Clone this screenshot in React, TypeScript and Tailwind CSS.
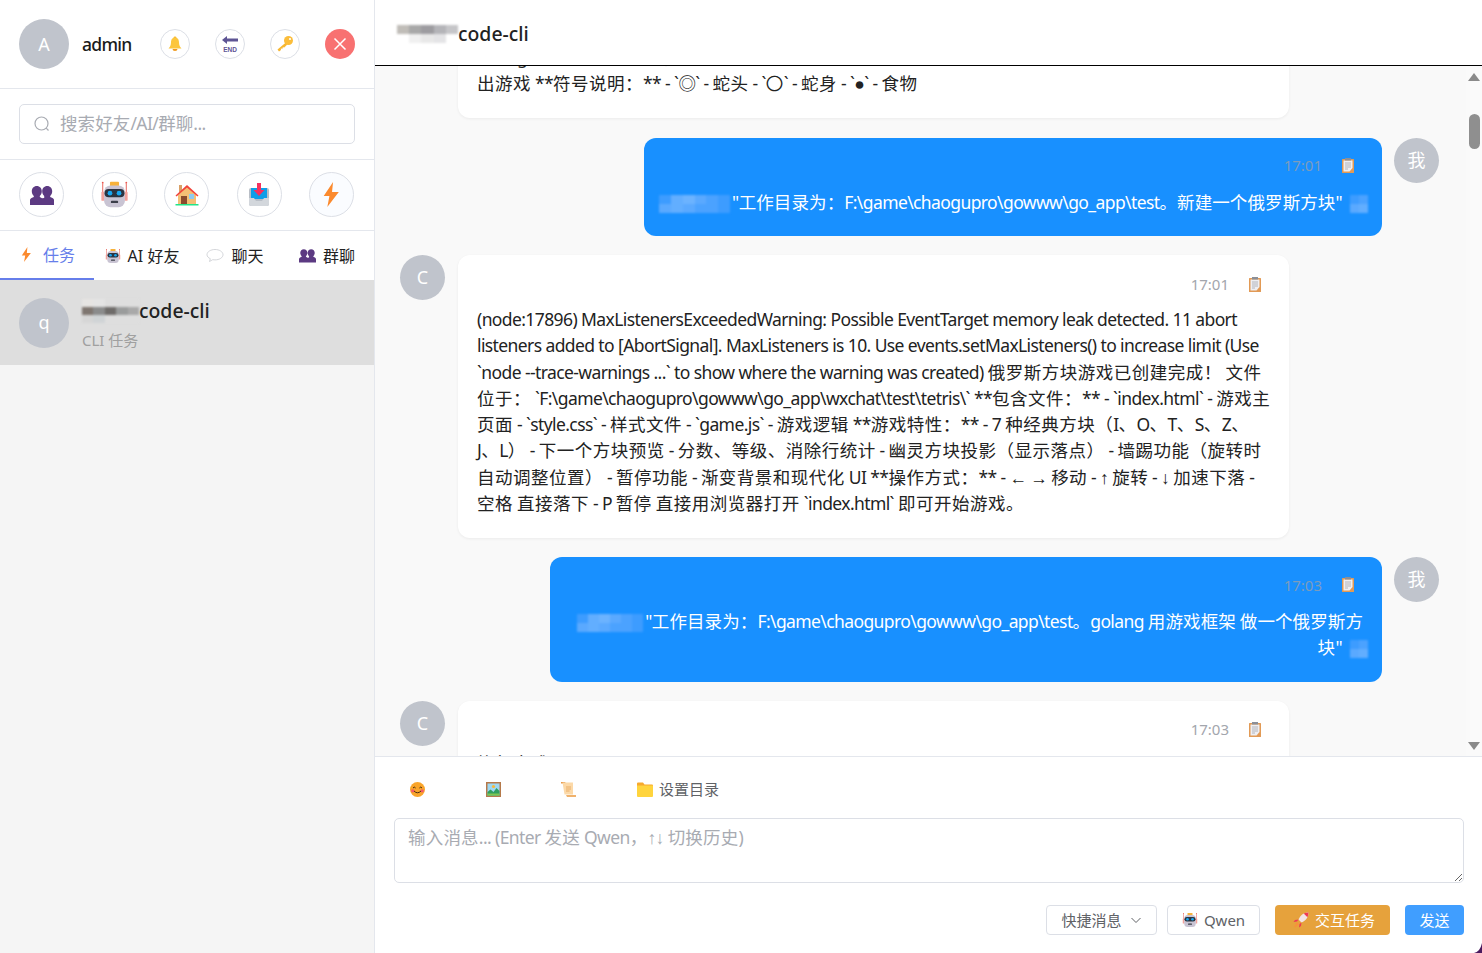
const SANS = 'font-["Noto_Sans","Liberation_Sans","Noto_Sans_CJK_SC",sans-serif]'

function Robot({ size = 30 }: { size?: number }) {
  return (
    <svg width={size} height={size} viewBox="0 0 32 32">
      <path d="M3 4v14M29 4v14" stroke="#e8584f" strokeWidth="1" />
      <circle cx="3" cy="3" r="1" fill="#e8584f" />
      <circle cx="29" cy="3" r="1" fill="#e8584f" />
      <rect x="1.500" y="13" width="3.500" height="10" rx="1" fill="#f2a29b" />
      <rect x="27" y="13" width="3.500" height="10" rx="1" fill="#f2a29b" />
      <rect x="11" y="2" width="10" height="5" rx="1" fill="#f7b23b" />
      <rect x="4.500" y="6" width="23" height="24" rx="7" fill="#c9c4d3" />
      <rect x="5" y="10" width="22" height="9" rx="4.500" fill="#2b3440" />
      <circle cx="11" cy="14.500" r="2.600" fill="#18a7f0" />
      <circle cx="21" cy="14.500" r="2.600" fill="#18a7f0" />
      <rect x="12" y="23" width="8" height="2.500" rx="1" fill="#3c3f4a" />
    </svg>
  )
}

function Group({ size = 24 }: { size?: number }) {
  return (
    <svg width={size} height={size} viewBox="0 0 24 24" fill="#5c3a82">
      <path d="M6.800 3c3 0 5 2.300 5 5.200 0 2-.8 3.700-2 4.700v1l2.200 1.300L14.200 14.900v-2C13 11.900 12.200 10.200 12.200 8.200 12.200 5.300 14.200 3 17.200 3s5 2.300 5 5.200c0 2-.8 3.700-2 4.700v1l2.300 1c1 .5 1.500 1.300 1.500 2.300V22H0v-4.800c0-1 .5-1.800 1.500-2.300l2.300-1v-1c-1.200-1-2-2.700-2-4.700C1.800 5.300 3.800 3 6.800 3z" />
    </svg>
  )
}

function House() {
  return (
    <svg width="24" height="24" viewBox="0 0 24 24">
      <rect x="4" y="2" width="3" height="7" fill="#d9a066" />
      <path d="M12 3l9 9v9H3v-9z" fill="#f4bf75" />
      <path d="M0.500 12.500L12 2l11.500 10.500-1 1L12 4.500 1.500 13.500z" fill="#f0433a" />
      <rect x="6" y="13" width="6" height="8" fill="#8a4b2d" />
      <rect x="14" y="11" width="5" height="5" fill="#8ec9f0" />
      <rect x="0.500" y="21" width="23" height="1.500" fill="#22e58a" />
    </svg>
  )
}

function Inbox() {
  return (
    <svg width="24" height="24" viewBox="0 0 24 24">
      <rect x="2" y="5" width="20" height="18" rx="2" fill="#b9bec6" />
      <path d="M4 5h16v11H4z" fill="#0f9ee8" />
      <path d="M2 15h5l2 3h6l2-3h5v6a2 2 0 0 1-2 2H4a2 2 0 0 1-2-2z" fill="#d3d7dc" />
      <path d="M10 0h4v7h3.500L12 13 6.500 7H10z" fill="#f6325f" />
    </svg>
  )
}

function Bolt({ size = 24 }: { size?: number }) {
  return (
    <svg width={size} height={size} viewBox="0 0 24 24">
      <path d="M13.500 0L4.500 13.500h5.500L8 24l11-14.500h-6.500z" fill="#fb8a2e" />
    </svg>
  )
}

function Bell() {
  return (
    <svg width="16" height="16" viewBox="0 0 16 16">
      <circle cx="8" cy="1.800" r="1.400" fill="#f5b52e" />
      <path d="M8 1.500c3 0 4 2.500 4 5 0 2.500 1 4.500 2.500 6h-13C3 11 4 9 4 6.500c0-2.500 1-5 4-5z" fill="#fcc63d" />
      <path d="M5.500 13h5a2.500 2 0 0 1-5 0z" fill="#f09a1e" />
    </svg>
  )
}

function EndArrow() {
  return (
    <svg width="18" height="18" viewBox="0 0 18 18">
      <path d="M1 5l5-4v2.500h11v3H6V9z" fill="#5d5494" />
      <text x="9" y="16.500" textAnchor="middle" fontSize="6.500" fontWeight="700" fill="#5d5494" fontFamily="Liberation Sans, sans-serif">END</text>
    </svg>
  )
}

function Key() {
  return (
    <svg width="18" height="18" viewBox="0 0 18 18">
      <path d="M10.500 7L1.500 14.500l1.500 2 2-1.500-.2-1.500 1.700.2.300-1.500 1.500.2 4-4z" fill="#f7b731" />
      <circle cx="12.500" cy="5.500" r="4.500" fill="#fbbd3a" />
      <circle cx="14" cy="4" r="1.100" fill="#fff" />
    </svg>
  )
}

function Clipboard() {
  return (
    <svg width="12" height="15" viewBox="0 0 12 15">
      <rect x="0" y="1" width="12" height="14" rx="0.500" fill="#e29a55" />
      <path d="M1.500 2.500h9V10l-3 3.500h-6z" fill="#eeeef2" />
      <rect x="3" y="0" width="6" height="2.500" fill="#8b8f98" />
      <path d="M3 5h6M3 7h6M3 9h6M3 11h3" stroke="#a3a6ae" strokeWidth="0.800" />
    </svg>
  )
}

function Smile() {
  return (
    <svg width="15" height="15" viewBox="0 0 15 15">
      <circle cx="7.500" cy="7.500" r="7.500" fill="#f9a52b" />
      <circle cx="2.800" cy="8.800" r="1.600" fill="#f4586a" />
      <circle cx="12.200" cy="8.800" r="1.600" fill="#f4586a" />
      <path d="M3 6q1.300-1.800 2.600 0M9.400 6q1.300-1.800 2.600 0M4 9q3.500 3.500 7 0" stroke="#4a2c12" strokeWidth="1" fill="none" />
    </svg>
  )
}

function Picture() {
  return (
    <svg width="15" height="15" viewBox="0 0 15 15">
      <rect width="15" height="15" fill="#b5794a" />
      <rect x="1.500" y="1.500" width="12" height="12" fill="#9fd8f2" />
      <circle cx="7.500" cy="4.500" r="1.600" fill="#f8b83a" />
      <path d="M1.500 10l3-2.500 3 2.500 3-4 3 3v4.500h-12z" fill="#2f9e5f" />
      <rect x="1.500" y="11.500" width="12" height="2" fill="#7fc651" />
    </svg>
  )
}

function Scroll() {
  return (
    <svg width="15" height="15" viewBox="0 0 15 15">
      <path d="M0 0h4l1 1.500H0z" fill="#e89a4b" />
      <path d="M1.500 0.500h10.500v12H3.500z" fill="#fcd9a8" />
      <path d="M5 13h10v2H6z" fill="#f0b26c" />
      <path d="M5 5h5M5 7h5M5 9h3.500" stroke="#e8a860" strokeWidth="0.900" />
    </svg>
  )
}

function Folder() {
  return (
    <svg width="16" height="15" viewBox="0 0 16 15">
      <path d="M0 1.500a1 1 0 0 1 1-1h5l1.500 2H15a1 1 0 0 1 1 1V5H0z" fill="#f7a92e" />
      <path d="M0 3.500h16V14a1 1 0 0 1-1 1H1a1 1 0 0 1-1-1z" fill="#ffd43d" />
    </svg>
  )
}

function Rocket() {
  return (
    <svg width="16" height="16" viewBox="0 0 16 16">
      <path d="M15.500.500c-4.500 0-8 2.500-10 7l3 3c4.500-2 7-5.500 7-10z" fill="#f3e4e4" />
      <path d="M15.500.500c-1.800 0-3.400.4-4.800 1.100l3.700 3.700c.7-1.400 1.100-3 1.100-4.800z" fill="#ee3a52" />
      <path d="M5.500 7.500L2 8l-1.500 2 3.500-.5zM8.500 10.500L8 14l-2 1.500.5-3.500z" fill="#ee3a52" />
      <path d="M4 10l2 2-3.500 3.500-1.500-.5z" fill="#f8913a" />
    </svg>
  )
}

function Bubble() {
  return (
    <svg width="18" height="15" viewBox="0 0 18 15">
      <path d="M9 1.500c4.400 0 8 2.300 8 5.200s-3.600 5.200-8 5.200c-.8 0-1.600-.1-2.300-.2L3.500 13.500l.8-2.800C2.300 9.800 1 8.400 1 6.700 1 3.800 4.600 1.500 9 1.500z" fill="#fff" stroke="#c9ccd1" strokeWidth="0.800" />
    </svg>
  )
}

// mosaic over a redacted word in the screenshot
function Blur({ w, h = 14, rows }: { w: number; h?: number; rows: string[][] }) {
  return (
    <span className="inline-flex flex-col align-middle blur-[1px]" style={{ width: w, height: h }}>
      {rows.map((row, r) => (
        <span key={r} className="flex flex-1">
          {row.map((c, i) => (
            <span key={i} className="flex-1" style={{ background: c }} />
          ))}
        </span>
      ))}
    </span>
  )
}

const BUBBLE_WIDE = [
  ['#3d9cff', '#62aeff', '#6cb3ff', '#5aa9ff', '#4ba2ff', '#3d9cff'],
  ['#5aa9ff', '#62aeff', '#5aa9ff', '#4ba2ff', '#4ba2ff', '#3d9cff'],
]
const BUBBLE_NARROW = [
  ['#3d9cff', '#4ba2ff'],
  ['#5aa9ff', '#62aeff'],
]

// the latin and the CJK runs have different advances in the screenshot
function Mixed({ text, latin = 'tracking-[-0.6px]', cjk = 'tracking-[0.5px]' }: { text: string; latin?: string; cjk?: string }) {
  return (
    <>
      {text.split(/([\u3000-\u9fff\uff00-\uffef]+)/).map((part, i) => (
        <span key={i} className={i % 2 === 1 ? cjk : latin}>{part}</span>
      ))}
    </>
  )
}

const REPLY_LINES = [
  '(node:17896) MaxListenersExceededWarning: Possible EventTarget memory leak detected. 11 abort',
  'listeners added to [AbortSignal]. MaxListeners is 10. Use events.setMaxListeners() to increase limit (Use',
  '`node --trace-warnings ...` to show where the warning was created) 俄罗斯方块游戏已创建完成！ 文件',
  '位于： `F:\\game\\chaogupro\\gowww\\go_app\\wxchat\\test\\tetris\\` **包含文件：** - `index.html` - 游戏主',
  '页面 - `style.css` - 样式文件 - `game.js` - 游戏逻辑 **游戏特性：** - 7 种经典方块（I、O、T、S、Z、',
  'J、L） - 下一个方块预览 - 分数、等级、消除行统计 - 幽灵方块投影（显示落点） - 墙踢功能（旋转时',
  '自动调整位置） - 暂停功能 - 渐变背景和现代化 UI **操作方式：** - ← → 移动 - ↑ 旋转 - ↓ 加速下落 -',
  '空格 直接落下 - P 暂停 直接用浏览器打开 `index.html` 即可开始游戏。',
]

function IconButton({ children, danger }: { children?: React.ReactNode; danger?: boolean }) {
  return (
    <button className={danger
      ? 'flex h-[30px] w-[30px] items-center justify-center rounded-full bg-[#f87171]'
      : 'flex h-[30px] w-[30px] items-center justify-center rounded-full border border-[#dcdfe6] bg-white'}>
      {children}
    </button>
  )
}

function ActionButton({ children, tint }: { children: React.ReactNode; tint?: boolean }) {
  return (
    <button className={`flex h-[45px] w-[45px] items-center justify-center rounded-full border border-[#dcdfe6] ${tint ? 'bg-[#fafcff]' : 'bg-white'}`}>
      {children}
    </button>
  )
}

function Avatar({ label, size = 45 }: { label: string; size?: number }) {
  return (
    <div
      className="flex shrink-0 items-center justify-center rounded-full bg-[#c0c4cc] text-[18px] text-white"
      style={{ width: size, height: size }}
    >
      {label}
    </div>
  )
}

function MineMeta({ time }: { time: string }) {
  return (
    <div className="flex h-[20px] items-center justify-end gap-[20px] pr-[14px] text-[15px] text-[#7c9cbc]">
      <span>{time}</span>
      <Clipboard />
    </div>
  )
}

function TheirMeta({ time }: { time: string }) {
  return (
    <div className="flex h-[20px] items-center justify-end gap-[20px] pr-[9px] text-[15px] text-[#a3a6ad]">
      <span>{time}</span>
      <Clipboard />
    </div>
  )
}

export default function App() {
  return (
    <div className={`relative flex h-[953px] w-[1482px] overflow-hidden bg-white text-[#222] ${SANS}`}>
      {/* Sidebar */}
      <aside className="flex w-[375px] shrink-0 flex-col border-r border-[#e4e7ed] bg-[#f5f5f5]">
        <div className="flex h-[89px] shrink-0 items-center border-b border-[#e4e7ed] bg-white pl-[19px] pr-[19px]">
          <Avatar label="A" size={50} />
          <span className="ml-[13px] text-[17.5px] font-medium tracking-[-0.7px] text-[#1a1a1a]">admin</span>
          <div className="ml-auto flex items-center gap-[25px] pb-[1px]">
            <IconButton><Bell /></IconButton>
            <IconButton><EndArrow /></IconButton>
            <IconButton><Key /></IconButton>
            <IconButton danger>
              <svg width="14" height="14" viewBox="0 0 14 14" stroke="#fff" strokeWidth="1.500"><path d="M1.500 1.500l11 11M12.500 1.500l-11 11" /></svg>
            </IconButton>
          </div>
        </div>

        <div className="flex h-[71px] shrink-0 items-center border-b border-[#e4e7ed] bg-white px-[19px]">
          <div className="flex h-[40px] w-full items-center rounded-[5px] border border-[#dcdfe6] pl-[14px]">
            <svg width="16" height="16" viewBox="0 0 16 16" fill="none" stroke="#a8abb2" strokeWidth="1.200">
              <circle cx="7.500" cy="7.500" r="6.500" />
              <path d="M12.200 12.200l2.300 2.300" />
            </svg>
            <span className="mb-[2px] ml-[10px] text-[17.5px] text-[#a8abb2]">
              <Mixed text="搜索好友/AI/群聊..." cjk="tracking-[0.1px]" />
            </span>
          </div>
        </div>

        <div className="flex h-[71px] shrink-0 items-center justify-between border-b border-[#e4e7ed] bg-white pb-[1px] pl-[19px] pr-[20px]">
          <ActionButton><Group /></ActionButton>
          <ActionButton><Robot size={29} /></ActionButton>
          <ActionButton><House /></ActionButton>
          <ActionButton><Inbox /></ActionButton>
          <ActionButton tint><Bolt size={25} /></ActionButton>
        </div>

        <div className="flex h-[49px] shrink-0 bg-white text-[16px] leading-none">
          <div className="flex w-[94px] items-center justify-center gap-[9px] border-b-2 border-[#667eea] text-[#667eea]">
            <Bolt size={15} />
            <span>任务</span>
          </div>
          <div className="flex w-[96px] items-center justify-center gap-[7px]">
            <Robot size={16} />
            <span>AI 好友</span>
          </div>
          <div className="flex w-[90px] items-center justify-center gap-[7px]">
            <Bubble />
            <span>聊天</span>
          </div>
          <div className="flex w-[94px] items-center justify-center gap-[7px]">
            <Group size={17} />
            <span>群聊</span>
          </div>
        </div>

        <div className="flex h-[85px] shrink-0 items-center bg-[#dedede] pl-[19px]">
          <Avatar label="q" size={50} />
          <div className="ml-[13px]">
            <div className="mt-[3px] flex h-[26px] items-center text-[19.4px] font-medium leading-none">
              <Blur
                w={57}
                h={24}
                rows={[
                  ['#e6e4e2', '#e4e4e4', '#dedede', '#dedede', '#dedede'],
                  ['#7f7670', '#8b8c8c', '#6f6c6a', '#9a9c9c', '#a9a9a9'],
                  ['#d6d6d6', '#d0d4d6', '#dedede', '#dedede', '#dedede'],
                ]}
              />
              <span>code-cli</span>
            </div>
            <div className="mt-[6px] text-[15px] leading-[20px] text-[#a0a0a0]">CLI 任务</div>
          </div>
        </div>
      </aside>

      {/* Chat */}
      <main className="flex min-w-0 flex-1 flex-col">
        <header className="flex h-[66px] shrink-0 items-center border-b border-black pl-[22px] pt-[3px]">
          <Blur
            w={61}
            h={18}
            rows={[
              ['#c0bdb8', '#a8a8a8', '#9d9ca0', '#b4b4b8', '#c5c5c8'],
              ['#ffffff', '#f0f0f0', '#e8e8e8', '#e4e4e6', '#ffffff'],
            ]}
          />
          <span className="text-[19.4px] font-medium">code-cli</span>
        </header>

        <div className="flex min-h-0 flex-1 bg-[#f9f9f9]">
          <div className="min-w-0 flex-1 overflow-hidden pl-[25px] pr-[27px]">
            <div className="-mt-[40px] flex flex-col gap-[18.75px] text-[17.5px] leading-[26.25px]">
              <div className="mb-[1.25px] ml-[58px] w-[831px] rounded-[12px] bg-white px-[19px] pb-[21px] pt-[18px] shadow-[0_1px_3px_rgba(0,0,0,0.06)]">
                <Mixed text="运行 git status 查看结果，并退出游戏" />
                <br />
                <Mixed text="出游戏 **符号说明：** - `◎` - 蛇头 - `〇` - 蛇身 - `●` - 食物" />
              </div>

              <div className="flex items-start justify-end gap-[12px]">
                <div className="rounded-[12px] bg-[#1890ff] pb-[21.5px] pl-[15px] pr-[14px] pt-[18px] text-white">
                  <MineMeta time="17:01" />
                  <div className="mt-[13px] whitespace-nowrap">
                    <Blur w={71} h={18} rows={BUBBLE_WIDE} />
                    <span className="mx-[2px]"><Mixed cjk="tracking-[0.1px]" text={'"工作目录为：F:\\game\\chaogupro\\gowww\\go_app\\test。新建一个俄罗斯方块"'} /></span>
                    <span className="ml-[6px]"><Blur w={18} h={18} rows={BUBBLE_NARROW} /></span>
                  </div>
                </div>
                <Avatar label="我" />
              </div>

              <div className="flex items-start gap-[13px]">
                <Avatar label="C" />
                <div className="w-[831px] rounded-[12px] bg-white px-[19px] pb-[22px] pt-[19px] shadow-[0_1px_3px_rgba(0,0,0,0.06)]">
                  <TheirMeta time="17:01" />
                  <div className="mt-[12px] whitespace-nowrap">
                    {REPLY_LINES.map((line) => (
                      <div key={line}><Mixed text={line} /></div>
                    ))}
                  </div>
                </div>
              </div>

              <div className="flex items-start justify-end gap-[12px]">
                <div className="w-[832px] rounded-[12px] bg-[#1890ff] pb-[21.5px] pl-[15px] pr-[14px] pt-[18px] text-right text-white">
                  <MineMeta time="17:03" />
                  <div className="mt-[13px] whitespace-nowrap">
                    <div>
                      <Blur w={66} h={18} rows={BUBBLE_WIDE} />
                      <span className="ml-[2px] mr-[5px]"><Mixed cjk="tracking-[0.1px]" text={'"工作目录为：F:\\game\\chaogupro\\gowww\\go_app\\test。golang 用游戏框架 做一个俄罗斯方'} /></span>
                    </div>
                    <div>
                      <span className="mr-[2px]"><Mixed text={'块"'} /></span>
                      <span className="ml-[6px]"><Blur w={18} h={18} rows={BUBBLE_NARROW} /></span>
                    </div>
                  </div>
                </div>
                <Avatar label="我" />
              </div>

              <div className="flex items-start gap-[13px]">
                <Avatar label="C" />
                <div className="w-[831px] rounded-[12px] bg-white px-[19px] pb-[22px] pt-[19px] shadow-[0_1px_3px_rgba(0,0,0,0.06)]">
                  <TheirMeta time="17:03" />
                  <div className="mt-[10px]"><Mixed text="执行完成" /></div>
                </div>
              </div>
            </div>
          </div>

          {/* Scrollbar */}
          <div className="flex w-[16px] shrink-0 flex-col items-center bg-[#fafafa]">
            <div className="mt-[7px] h-0 w-0 border-x-[6px] border-b-[8px] border-x-transparent border-b-[#8a8a8a]" />
            <div className="mt-[33px] h-[35px] w-[11px] rounded-full bg-[#8f8f8f]" />
            <div className="mb-[6px] mt-auto h-0 w-0 border-x-[6px] border-t-[8px] border-x-transparent border-t-[#8a8a8a]" />
          </div>
        </div>

        {/* Input */}
        <div className="h-[197px] shrink-0 border-t border-[#e4e7ed] bg-white pl-[19px] pr-[18px]">
          <div className="flex h-[61px] items-center pl-[16px] pt-[4px] text-[15px] text-[#606266]">
            <Smile />
            <span className="ml-[61px]"><Picture /></span>
            <span className="ml-[60px]"><Scroll /></span>
            <span className="ml-[61px] flex items-center gap-[6px]"><Folder />设置目录</span>
          </div>
          <div className="relative">
            <textarea className="block h-[65px] w-full resize-y rounded-[5px] border border-[#dcdfe6] outline-none" />
            <div className="pointer-events-none absolute left-[14px] top-[6px] text-[17.5px] leading-[26px] text-[#a8abb2]">
              <Mixed text="输入消息... (Enter 发送 Qwen，↑↓ 切换历史)" cjk="tracking-[0.2px]" />
            </div>
          </div>
          <div className="mt-[22px] flex items-center justify-end text-[15px]">
            <button className="flex h-[30px] w-[111px] items-center justify-center gap-[8px] rounded-[4px] border border-[#dcdfe6] text-[#606266]">
              快捷消息
              <svg width="12" height="12" viewBox="0 0 12 12" fill="none" stroke="#606266"><path d="M1.500 4l4.500 4.500L10.500 4" /></svg>
            </button>
            <button className="ml-[10px] flex h-[30px] w-[93px] items-center justify-center gap-[6px] rounded-[4px] border border-[#dcdfe6] text-[#606266]">
              <Robot size={16} />
              Qwen
            </button>
            <button className="ml-[15px] flex h-[30px] w-[115px] items-center justify-center gap-[6px] rounded-[4px] bg-[#e6a23c] pl-[3px] text-white">
              <Rocket />
              交互任务
            </button>
            <button className="ml-[15px] h-[30px] w-[59px] rounded-[4px] bg-[#409eff] text-white">发送</button>
          </div>
        </div>
      </main>

      {/* corner of the window behind the capture */}
      <svg className="absolute bottom-0 right-0" width="8" height="10" viewBox="0 0 8 10">
        <path d="M8 0v10H0q6-1 8-10z" fill="#4a1a5e" />
      </svg>
    </div>
  )
}
